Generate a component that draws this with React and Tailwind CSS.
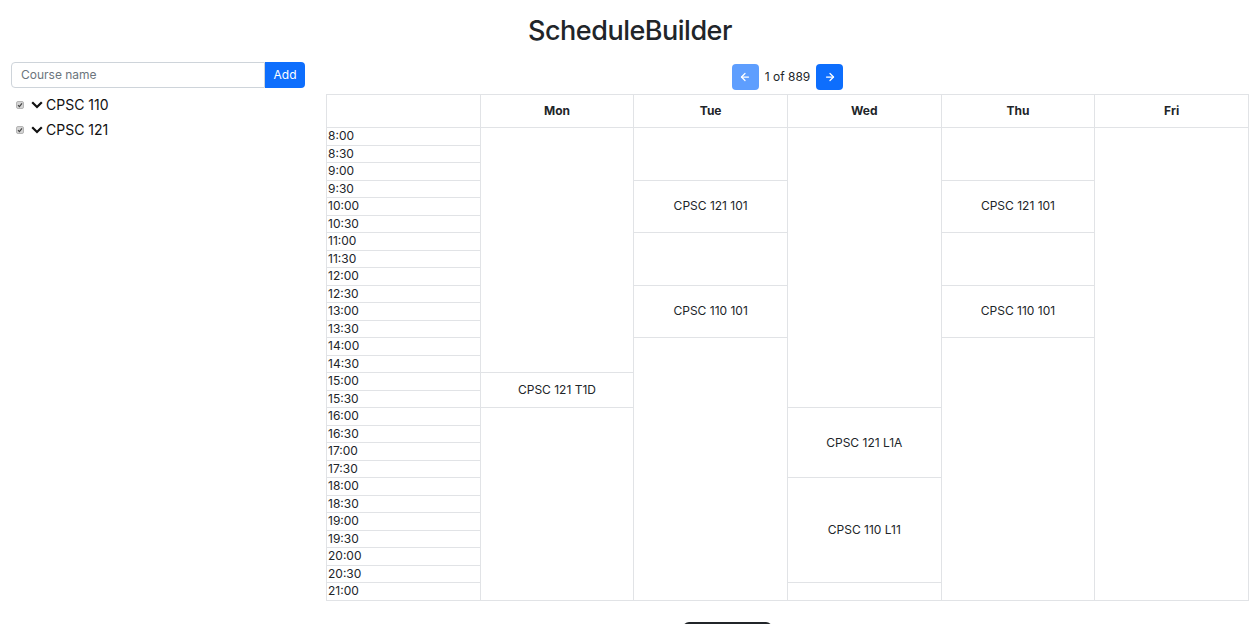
import { ArrowLeft, ArrowRight } from 'lucide-react';

const TIMES = [];
for (let h = 8; h <= 21; h++) {
  TIMES.push(`${h}:00`);
  if (h < 21) TIMES.push(`${h}:30`);
}

// Each day is a list of [rowCount, label] blocks covering all 27 half-hour rows
const DAYS = [
  { name: 'Mon', blocks: [[14, ''], [2, 'CPSC 121 T1D'], [11, '']] },
  { name: 'Tue', blocks: [[3, ''], [3, 'CPSC 121 101'], [3, ''], [3, 'CPSC 110 101'], [15, '']] },
  { name: 'Wed', blocks: [[16, ''], [4, 'CPSC 121 L1A'], [6, 'CPSC 110 L11'], [1, '']] },
  { name: 'Thu', blocks: [[3, ''], [3, 'CPSC 121 101'], [3, ''], [3, 'CPSC 110 101'], [15, '']] },
  { name: 'Fri', blocks: [[27, '']] },
];

// Work out which day-cells start on each row
function cellsForRow(row) {
  const cells = [];
  DAYS.forEach(day => {
    let start = 0;
    for (const [span, label] of day.blocks) {
      if (start === row) cells.push({ key: day.name + row, span, label });
      start += span;
    }
  });
  return cells;
}

function CourseItem({ name }) {
  return (
    <div className="flex items-center h-[25px]">
      <span className="ml-[5px] w-[8px] h-[8px] rounded-[2px] bg-[#d4d4d4] border border-[#b5b5b5] flex items-center justify-center">
        <svg width="6" height="6" viewBox="0 0 6 6" fill="none">
          <path d="M1 3.2 2.4 4.6 5 1.4" stroke="#444" strokeWidth="1.2" />
        </svg>
      </span>
      <svg className="ml-[7px]" width="12" height="8" viewBox="0 0 12 8" fill="none">
        <path d="M1.2 1.2 6 6 10.8 1.2" stroke="#111" strokeWidth="2.2" />
      </svg>
      <span className="ml-[3px] text-[14px] text-[#111]">{name}</span>
    </div>
  );
}

export default function App() {
  return (
    <div className="w-[1260px] h-[624px] overflow-hidden bg-white text-[#212529] font-['Inter','Liberation_Sans',sans-serif]">
      <h1 className="pt-[14px] text-center text-[27px] leading-[34px] font-medium tracking-[-0.5px]">ScheduleBuilder</h1>

      <div className="flex px-[11px] mt-[14px] gap-[21px]">
        {/* Sidebar */}
        <div className="w-[294px] flex-shrink-0">
          <div className="flex h-[26px]">
            <input
              placeholder="Course name"
              className="flex-1 min-w-0 border border-[#ced4da] rounded-l-[4px] px-[9px] text-[12px] placeholder:text-[#6c757d] outline-none"
            />
            <button className="w-[40px] bg-[#0d6efd] text-white text-[12px] rounded-r-[4px]">Add</button>
          </div>
          <div className="mt-[4px]">
            <CourseItem name="CPSC 110" />
            <CourseItem name="CPSC 121" />
          </div>
        </div>

        {/* Main */}
        <div className="flex-1">
          <div className="flex items-center justify-center mt-[2px] mb-[4px] gap-[6px]">
            <button className="w-[27px] h-[26px] rounded-[4px] bg-[#5e9efe] flex items-center justify-center">
              <ArrowLeft className="w-[12px] h-[12px] text-white" strokeWidth={2.5} />
            </button>
            <span className="text-[12px]">1 of 889</span>
            <button className="w-[27px] h-[26px] rounded-[4px] bg-[#0d6efd] flex items-center justify-center">
              <ArrowRight className="w-[12px] h-[12px] text-white" strokeWidth={2.5} />
            </button>
          </div>

          <table className="w-full table-fixed border-collapse text-[12px]">
            <thead>
              <tr className="h-[33px]">
                <th className="border border-[#e1e3e6]" />
                {DAYS.map(d => (
                  <th key={d.name} className="border border-[#e1e3e6] font-bold">{d.name}</th>
                ))}
              </tr>
            </thead>
            <tbody>
              {TIMES.map((t, row) => (
                <tr key={t} className="h-[17.5px]">
                  <td className="border border-[#e1e3e6] px-[1px] py-0 leading-[16px] text-left">{t}</td>
                  {cellsForRow(row).map(c => (
                    <td key={c.key} rowSpan={c.span} className="border border-[#e1e3e6] text-center align-middle">
                      {c.label}
                    </td>
                  ))}
                </tr>
              ))}
            </tbody>
          </table>

          <div className="mt-[21px] ml-[357px]">
            <button className="w-[89px] h-[32px] rounded-[6px] bg-[#212529]" />
          </div>
        </div>
      </div>
    </div>
  );
}
